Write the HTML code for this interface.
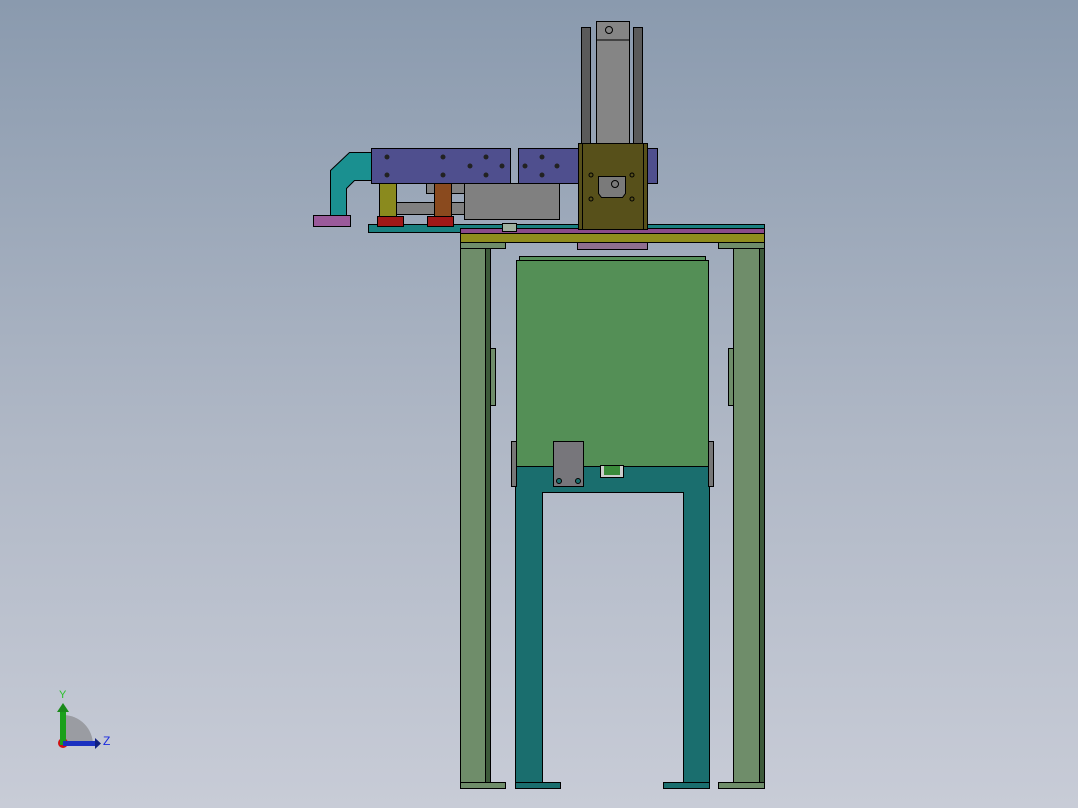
<!DOCTYPE html>
<html><head><style>
html,body{margin:0;padding:0;width:1078px;height:808px;overflow:hidden}
body{background:linear-gradient(#8a9aae,#b0b8c6 55%,#c8ccd7)}
svg{position:absolute;left:0;top:0}
</style></head><body>
<svg width="1078" height="808" viewBox="0 0 1078 808" stroke="#000" stroke-width="1">
<!-- outer columns -->
<rect x="460.5" y="242.5" width="45" height="6" fill="#6f8d6a"/>
<rect x="460.5" y="248.5" width="30" height="534" fill="#6f8d6a"/>
<rect x="485.5" y="248.5" width="5" height="534" fill="#3d5a3a"/>
<rect x="460.5" y="782.5" width="45" height="6" fill="#6f8d6a"/>
<rect x="490.5" y="348.5" width="5" height="57" fill="#6f8d6a"/>
<rect x="718.5" y="242.5" width="46" height="6" fill="#6f8d6a"/>
<rect x="733.5" y="248.5" width="31" height="534" fill="#6f8d6a"/>
<rect x="759.5" y="248.5" width="5" height="534" fill="#3d5a3a"/>
<rect x="718.5" y="782.5" width="46" height="6" fill="#6f8d6a"/>
<rect x="728.5" y="348.5" width="5" height="57" fill="#6f8d6a"/>
<!-- teal frame -->
<path d="M515.5 466.5H709.5V782.5H683.5V492.5H542.5V782.5H515.5Z" fill="#1a6e6e"/>
<rect x="515.5" y="782.5" width="45" height="6" fill="#1a6e6e"/>
<rect x="663.5" y="782.5" width="46" height="6" fill="#1a6e6e"/>
<rect x="511.5" y="441.5" width="5" height="45" fill="#777"/>
<rect x="708.5" y="441.5" width="5" height="45" fill="#777"/>
<!-- green box -->
<rect x="519.5" y="256.5" width="186" height="4" fill="#56905a"/>
<rect x="516.5" y="260.5" width="192" height="206" fill="#548f56"/>
<rect x="600.5" y="465.5" width="23" height="12" fill="#ccc"/>
<rect x="604" y="466" width="16" height="9" fill="#3a8a3a" stroke="none"/>
<rect x="553.5" y="441.5" width="30" height="45" fill="#77767b"/>
<circle cx="559" cy="481" r="2.5" fill="#1a6e6e"/><circle cx="578" cy="481" r="2.5" fill="#1a6e6e"/>
<!-- table -->
<rect x="577.5" y="242.5" width="70" height="7" fill="#8f6f8f"/>
<rect x="368.5" y="224.5" width="396" height="8" fill="#1a8080"/>
<rect x="460.5" y="228.5" width="304" height="5" fill="#8a4a8a"/>
<rect x="460.5" y="233.5" width="304" height="9" fill="#8f8c1e"/>
<!-- left assembly -->
<path d="M349.5 152.5H372.5V180.5H354.5L346.5 188.5V226.5H330.5V170.5Z" fill="#1a9090"/>
<rect x="313.5" y="215.5" width="37" height="11" fill="#9a5a9a"/>
<rect x="396.5" y="202.5" width="68" height="12" fill="#808080"/>
<rect x="464.5" y="183.5" width="95" height="36" fill="#808080"/>
<rect x="426.5" y="183.5" width="38" height="10" fill="#808080"/>
<rect x="379.5" y="183.5" width="17" height="33" fill="#8a8a1e"/>
<rect x="434.5" y="183.5" width="17" height="33" fill="#8a4a1e"/>
<rect x="377.5" y="216.5" width="26" height="10" fill="#a01818"/>
<rect x="427.5" y="216.5" width="26" height="10" fill="#a01818"/>
<rect x="502.5" y="223.5" width="14" height="8" fill="#a0b0a0"/>
<rect x="371.5" y="148.5" width="139" height="35" fill="#4f4f8e"/>
<rect x="518.5" y="148.5" width="139" height="35" fill="#4f4f8e"/>
<g fill="#222" stroke="none">
<circle cx="387" cy="157" r="2.5"/><circle cx="387" cy="175" r="2.5"/>
<circle cx="443" cy="157" r="2.5"/><circle cx="443" cy="175" r="2.5"/>
<circle cx="486" cy="157" r="2.5"/><circle cx="486" cy="175" r="2.5"/>
<circle cx="470" cy="166" r="2.5"/><circle cx="502" cy="166" r="2.5"/>
<circle cx="542" cy="157" r="2.5"/><circle cx="542" cy="175" r="2.5"/>
<circle cx="525" cy="166" r="2.5"/><circle cx="557" cy="166" r="2.5"/>
</g>
<!-- cylinder -->
<rect x="581.5" y="27.5" width="9" height="116" fill="#5a5a5a"/>
<rect x="633.5" y="27.5" width="9" height="116" fill="#5a5a5a"/>
<rect x="596.5" y="21.5" width="33" height="122" fill="#858585"/>
<line x1="596" y1="40" x2="629" y2="40"/>
<circle cx="609" cy="30" r="3.5" fill="none"/>
<rect x="578.5" y="143.5" width="69" height="86" fill="#57501a"/>
<rect x="582.5" y="143.5" width="61" height="86" fill="#57501a"/>
<path d="M598.5 176.5H625.5V193.5L622.5 197.5H601.5L598.5 193.5Z" fill="#7a7a7a"/>
<circle cx="615" cy="184" r="3.5" fill="none"/>
<g fill="none"><circle cx="591" cy="175" r="2"/><circle cx="632" cy="175" r="2"/><circle cx="591" cy="199" r="2"/><circle cx="632" cy="199" r="2"/></g>
</svg>
<!-- axis triad -->
<svg width="1078" height="808">
<path d="M63 745V715A30 30 0 0 1 93 745Z" fill="#9a9ca2"/>
<circle cx="63" cy="743" r="5" fill="#d01010"/>
<rect x="60" y="710" width="6" height="35" fill="#1aa01a"/>
<path d="M57 712L63 703L69 712Z" fill="#1a8a1a"/>
<rect x="63" y="741" width="33" height="5" fill="#1a30c0"/>
<path d="M95 738L101 743.5L95 749Z" fill="#102080"/>
<text x="59" y="698" font-family="Liberation Sans,sans-serif" font-size="11" fill="#2ac02a">Y</text>
<text x="103" y="745" font-family="Liberation Sans,sans-serif" font-size="12" fill="#1a2ae0">Z</text>
</svg>
</body></html>
